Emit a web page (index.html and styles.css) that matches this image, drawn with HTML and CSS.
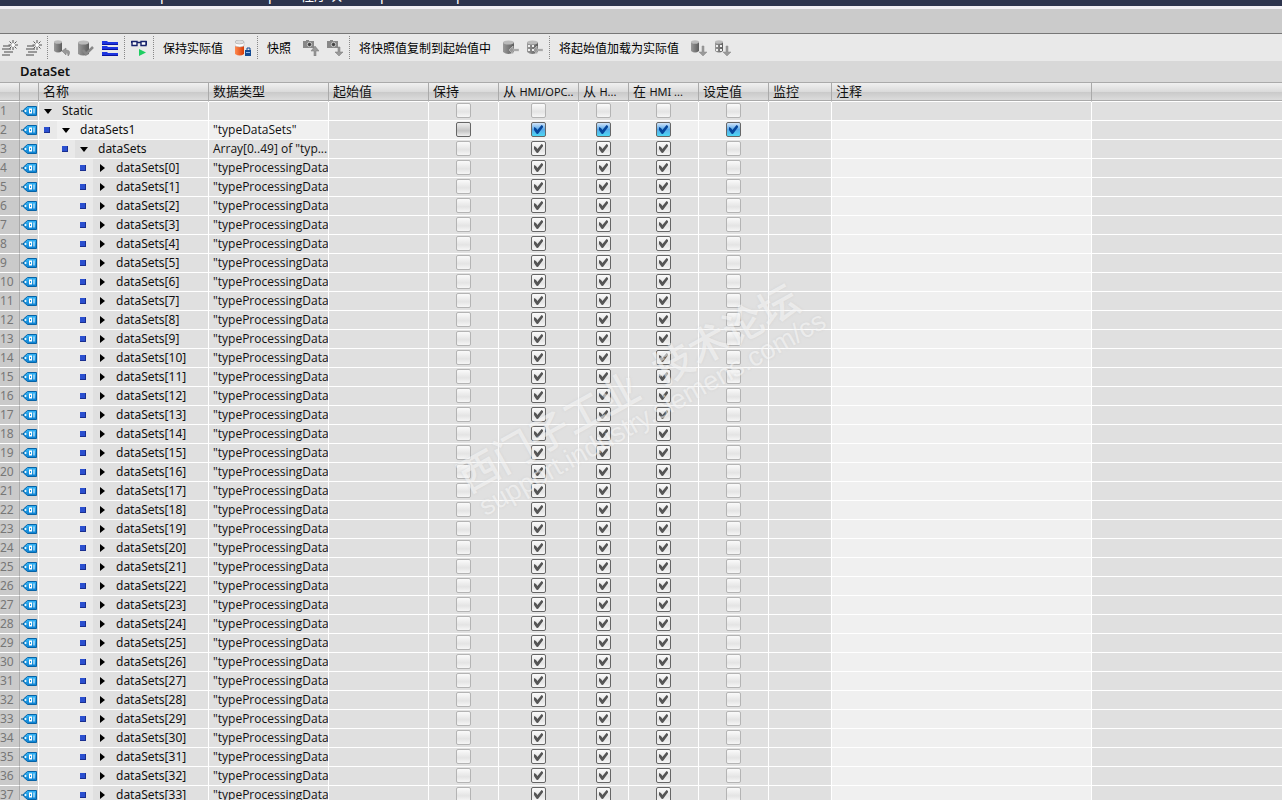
FILE: index.html
```
<!DOCTYPE html>
<html lang="zh-CN">
<head>
    <meta charset="UTF-8">
    <title>DataSet</title>
    <meta name="viewport" content="width=device-width, initial-scale=1.0">
    <link rel="stylesheet" href="styles.css">
</head>
<body>
    <!-- shared icons -->
    <svg class="sprite" aria-hidden="true">
        <defs>
            <linearGradient id="gray" x1="0" x2="1"><stop offset="0" stop-color="#999"/><stop offset="1" stop-color="#5c5c5c"/></linearGradient>
            <linearGradient id="orange" x1="0" x2="1"><stop offset="0" stop-color="#ff8a50"/><stop offset="1" stop-color="#d83c05"/></linearGradient>
            <linearGradient id="blue" x1="0" x2="0" y1="0" y2="1"><stop offset="0" stop-color="#35b4f5"/><stop offset="1" stop-color="#0a7fd0"/></linearGradient>
        </defs>
        <symbol id="i-tag" viewBox="0 0 16 12">
            <path d="M0 6h4" stroke="#064a7c" stroke-width="1"/>
            <path d="M6.500 1.500H15.500V10.500H6.500L2.500 7V5z" fill="url(#blue)" stroke="#0664a8"/>
            <circle cx="4.500" cy="6" r="1" fill="#fff"/>
            <rect x="8.500" y="4" width="2" height="4" fill="none" stroke="#fff"/>
            <path d="M13 3.500v5" stroke="#fff" stroke-width="1"/>
        </symbol>
        <symbol id="i-new" viewBox="0 0 16 16">
            <path d="M1 6h7M0 9h9M2 12h9M0 15h8" stroke="#999" stroke-width="2"/>
            <path d="M11 0v3M11 7v3M6.500 5h3M13 5h3M7.500 1.500l2 2M14.500 1.500l-2 2M7.500 8.500l2-2M14.500 8.500l-2-2" stroke="#555"/>
            <circle cx="11" cy="5" r="1.500" fill="#fff"/>
        </symbol>
        <symbol id="i-cyl" viewBox="0 0 16 16">
            <path d="M0 2v9q4 3 8 0V2z" fill="url(#gray)"/>
            <ellipse cx="4" cy="2" rx="4" ry="1.800" fill="#bbb"/>
        </symbol>
        <symbol id="i-undo" viewBox="0 0 16 16">
            <use href="#i-cyl"/>
            <path d="M8 11l4-3v2q5 0 3 5l-1 1q0-4-2-3v2z" fill="#999" stroke="#777" stroke-width=".5"/>
        </symbol>
        <symbol id="i-check" viewBox="0 0 16 16">
            <path d="M0 2v12q5 3 11 0V2z" fill="url(#gray)"/>
            <ellipse cx="5.500" cy="2.500" rx="5.500" ry="2" fill="#bbb"/>
            <path d="M5 10l3 4 7-7" fill="none" stroke="#888" stroke-width="2.500"/>
        </symbol>
        <symbol id="i-tree" viewBox="0 0 16 16">
            <path d="M0 1h5l1 1h10v3H0zM0 6h5l1 1h10v3H0zM0 12h5l1 1h10v3H0z" fill="#1d35e0"/>
            <path d="M6 1.500h10M6 6.500h10M6 11.500h10" stroke="#e9e9e9"/>
            <path d="M0 4.500h16M0 9.500h16M0 15.500h16" stroke="#0a14a0"/>
        </symbol>
        <symbol id="i-watch" viewBox="0 0 16 16">
            <path d="M1 1.500h5v4H1zM10 1.500h5v4h-5zM6 2.500h4M.500 1v2M15.500 1v4" fill="#fff" stroke="#17226b" stroke-width="1.400"/>
            <path d="M8 9l7 3.500L8 16z" fill="#1fce62"/>
        </symbol>
        <symbol id="i-keep" viewBox="0 0 16 16">
            <path d="M0 2v12q5 3 9 0V2z" fill="url(#orange)"/>
            <path d="M0 2v4q5 2 9 0V2z" fill="#fff" stroke="#aaa" stroke-width=".5"/>
            <ellipse cx="4.500" cy="2" rx="4.500" ry="2" fill="#ddd" stroke="#999" stroke-width=".5"/>
            <path d="M12 10V8h3v2" fill="none" stroke="#134b93"/>
            <rect x="10" y="10" width="6" height="6" fill="#134b93"/>
            <path d="M11 12.500h4" stroke="#8fb9ee"/>
        </symbol>
        <symbol id="i-cam" viewBox="0 0 16 16">
            <path d="M0 1h3V0h3v1h5v7H0z" fill="#888"/>
            <circle cx="6.500" cy="4.500" r="2.200" fill="#444" stroke="#ccc"/>
        </symbol>
        <symbol id="i-cam-up" viewBox="0 0 16 16">
            <use href="#i-cam"/>
            <path d="M12 6l4 5h-3v5h-2v-5H8z" fill="#999" stroke="#777" stroke-width=".5"/>
        </symbol>
        <symbol id="i-cam-down" viewBox="0 0 16 16">
            <use href="#i-cam"/>
            <path d="M12 16l4-4h-3V7h-2v5H8z" fill="#999" stroke="#777" stroke-width=".5"/>
        </symbol>
        <symbol id="i-dots" viewBox="0 0 16 16">
            <path d="M1 5h2v2H1zM5 5h2v2H5zM1 9h2v2H1zM5 9h2v2H5z" fill="#eee"/>
        </symbol>
        <symbol id="i-left" viewBox="0 0 16 16">
            <path d="M0 2v10q5 4 11 0V2z" fill="url(#gray)"/>
            <ellipse cx="5.500" cy="2.500" rx="5.500" ry="2" fill="#bbb"/>
            <path d="M6 10l4-4v3h6v2h-6v3z" fill="#999" stroke="#ccc" stroke-width=".6"/>
        </symbol>
        <symbol id="i-down" viewBox="0 0 16 16">
            <use href="#i-cyl"/>
            <path d="M12 16l4-4h-3V6h-2v6H8z" fill="#999" stroke="#888" stroke-width=".5"/>
        </symbol>
    </svg>

    <div class="titlebar"><span>p</span><span>p</span><span>程序块</span><span>p</span><span>p</span></div>
    <div class="band"></div>

    <div class="toolbar">
        <div class="group first">
            <button aria-label="插入行"><svg><use href="#i-new"/></svg></button>
            <button aria-label="添加行"><svg><use href="#i-new"/></svg></button>
        </div>
        <div class="group">
            <button aria-label="复位起始值"><svg><use href="#i-undo"/></svg></button>
            <button aria-label="更新接口"><svg><use href="#i-check"/></svg></button>
            <button aria-label="扩展模式"><svg><use href="#i-tree"/></svg></button>
        </div>
        <div class="group">
            <button aria-label="全部监视"><svg><use href="#i-watch"/></svg></button>
        </div>
        <div class="group">
            <button class="text">保持实际值</button>
            <button aria-label="锁定"><svg><use href="#i-keep"/></svg></button>
        </div>
        <div class="group">
            <button class="text">快照</button>
            <button aria-label="上传快照"><svg><use href="#i-cam-up"/></svg></button>
            <button aria-label="下载快照"><svg><use href="#i-cam-down"/></svg></button>
        </div>
        <div class="group">
            <button class="text">将快照值复制到起始值中</button>
            <button aria-label="复制全部"><svg><use href="#i-left"/></svg></button>
            <button aria-label="复制设定值"><svg><use href="#i-left"/><use href="#i-dots"/></svg></button>
        </div>
        <div class="group">
            <button class="text">将起始值加载为实际值</button>
            <button aria-label="加载全部"><svg><use href="#i-down"/></svg></button>
            <button aria-label="加载设定值"><svg><use href="#i-down"/><use href="#i-dots"/></svg></button>
        </div>
    </div>

    <h1>DataSet</h1>

    <div class="editor">
        <table>
            <colgroup>
                <col class="w-num"><col class="w-tag"><col class="w-name"><col class="w-type"><col class="w-start">
                <col class="w-check"><col class="w-access"><col class="w-write"><col class="w-check"><col class="w-check">
                <col class="w-watch"><col class="w-note"><col>
            </colgroup>
            <thead>
                <tr>
                    <th></th>
                    <th></th>
                    <th>名称</th>
                    <th>数据类型</th>
                    <th>起始值</th>
                    <th>保持</th>
                    <th>从 <small>HMI/OPC..</small></th>
                    <th>从 <small>H...</small></th>
                    <th>在 <small>HMI ...</small></th>
                    <th>设定值</th>
                    <th>监控</th>
                    <th>注释</th>
                    <th></th>
                </tr>
            </thead>
            <tbody id="rows"></tbody>
        </table>
        <div class="watermark">
            <div class="wm-name"><span>西门子工业</span><span>技术论坛</span></div>
            <div class="wm-site">support.industry.siemens.com/cs</div>
        </div>
    </div>
    <script src="rows.js"></script>
</body>
</html>
```
FILE: styles.css
```
* {
    box-sizing: border-box;
}
body {
    margin: 0;
    height: 100vh;
    overflow: hidden;
    display: flex;
    flex-direction: column;
    background: #e0e0e0;
    color: #111;
    font-family: "Noto Sans", "Noto Sans CJK SC", sans-serif;
    font-size: 12px;
}
.sprite {
    position: absolute;
    width: 0;
    height: 0;
}
.titlebar {
    flex: none;
    height: 6px;
    overflow: hidden;
    display: grid;
    grid-template-columns: 108px 32px 80px 76px auto;
    align-items: end;
    align-content: end;
    padding: 0 0 3px 160px;
    background: #2d344d;
    color: #fff;
    font-size: 14px;
    line-height: 16px;
}
.band {
    flex: none;
    height: 28px;
    background: #cbcbcb;
    border-top: 3px solid #f1eff3;
    border-bottom: 1px solid #777;
}

/* toolbar */
.toolbar {
    flex: none;
    display: flex;
    align-items: center;
    height: 27px;
    background: #e9e9e9;
    white-space: nowrap;
}
.group {
    display: flex;
    align-items: center;
    height: 23px;
    padding: 0 2px;
    border-left: 1px dotted #888;
}
.group.first {
    margin-left: -4px;
    border-left: 0;
    padding-right: 1px;
}
.toolbar button {
    display: flex;
    align-items: center;
    justify-content: center;
    width: 24px;
    height: 22px;
    padding: 0;
    border: 0;
    background: none;
    color: #000;
    font: inherit;
}
.toolbar button.text {
    width: auto;
    padding: 0 8px 0 7px;
}
.toolbar svg {
    width: 16px;
    height: 16px;
}

h1 {
    flex: none;
    margin: 0;
    height: 21px;
    padding-left: 20px;
    background: #d8d8d8;
    font-size: 13px;
    font-weight: 600;
    line-height: 21px;
}

/* variable table */
.editor {
    position: relative;
    flex: 1;
    min-height: 0;
    overflow: hidden;
}
table {
    width: 100%;
    table-layout: fixed;
    border-collapse: separate;
    border-spacing: 0;
}
.w-num { width: 20px; }
.w-tag { width: 19px; }
.w-name { width: 170px; }
.w-type { width: 120px; }
.w-start { width: 100px; }
.w-check { width: 70px; }
.w-access { width: 80px; }
.w-write { width: 50px; }
.w-watch { width: 63px; }
.w-note { width: 260px; }
th {
    height: 20px;
    padding: 0 0 2px 4px;
    border-top: 1px solid #aaa;
    border-right: 1px solid #aaa;
    border-bottom: 1px solid #fff;
    background: linear-gradient(#f0f0f0, #dadada 50%, #cacaca 52%, #dedede);
    box-shadow: inset 0 -1px #aaa;
    font-size: 13px;
    font-weight: 400;
    line-height: 14px;
    text-align: left;
    white-space: nowrap;
    overflow: hidden;
}
th small {
    font-size: 11px;
}
td {
    height: 19px;
    padding: 0;
    border-right: 1px solid #fff;
    border-bottom: 1px solid #fff;
    background: #e0e0e0;
    line-height: 18px;
    white-space: nowrap;
    overflow: hidden;
}
th:last-child, td:last-child {
    border-right: 0;
}
td.num {
    background: #cacaca;
    border-right-color: #aaa;
    color: #777;
}
td.tag {
    background: #d6d6d6;
}
td.tag svg {
    display: block;
    width: 16px;
    height: 12px;
    margin: 0 0 0 1px;
}
td.type {
    padding-left: 4px;
    font-family: "Open Sans", sans-serif;
}
td.check {
    vertical-align: top;
    padding-top: 1px;
}
td.check input {
    display: block;
    margin: 0 auto;
}
td.note, .current td.name, .current td.type, .current td.check {
    background: #f0f0f0;
}
.root td.note {
    background: #e0e0e0;
}

/* tree in the name column */
.node {
    display: flex;
    align-items: center;
    height: 18px;
}
.indent {
    display: flex;
    align-items: center;
    justify-content: flex-end;
    height: 18px;
    padding-right: 7px;
    background: #e9e9e9;
}
.indent.level0 { display: none; }
.indent.level1 { width: 18px; }
.indent.level2 { width: 36px; }
.indent.level3 { width: 54px; }
.indent::after {
    content: "";
    width: 5px;
    height: 5px;
    background: #2b50d0;
    border-right: 1px solid #1a2f90;
    border-bottom: 1px solid #1a2f90;
}
.toggle {
    display: flex;
    align-items: center;
    justify-content: center;
    width: 23px;
    height: 18px;
    padding: 0 5px 0 0;
    border: 0;
    background: none;
}
.toggle::before {
    content: "";
    border: 4px solid transparent;
    border-top: 5px solid #000;
    border-bottom: 0;
}
.toggle.closed::before {
    border: 4px solid transparent;
    border-left: 5px solid #000;
    border-right: 0;
}

/* check boxes */
input[type="checkbox"] {
    appearance: none;
    width: 15px;
    height: 15px;
    border: 1px solid #666;
    border-radius: 2px;
    background: linear-gradient(#fafafa, #e4e4e4 60%, #f6f6f6);
}
input[type="checkbox"]:disabled:not(:checked) {
    border-color: #b4b4b4;
}
input[type="checkbox"]:checked::before {
    content: "";
    display: block;
    width: 9px;
    height: 9px;
    margin: 2px;
    background: #555;
    clip-path: polygon(0 22%, 22% 34%, 38% 56%, 84% 0, 100% 12%, 100% 26%, 44% 100%, 28% 96%, 0 56%);
}
.current input[type="checkbox"] {
    background: linear-gradient(#eee, #c4c4c4 60%, #eee);
}
.current input[type="checkbox"]:checked {
    background: linear-gradient(#d2e5fa, #5aa8e8 50%, #4cd8f4);
}
.current input[type="checkbox"]:checked::before {
    background: #05469c;
}

/* forum mark over the grid */
.watermark {
    position: absolute;
    left: 442px;
    top: 276px;
    width: 400px;
    transform: rotate(-29deg);
    color: rgba(255, 255, 255, 0.5);
    text-shadow: 0 0 3px rgba(160, 160, 160, 0.2);
    white-space: nowrap;
    pointer-events: none;
}
.wm-name {
    display: flex;
    gap: 22px;
    font-family: "Noto Sans CJK SC", sans-serif;
    font-size: 40px;
    font-weight: 500;
    line-height: 44px;
}
.wm-site {
    padding-left: 4px;
    font-family: "Liberation Sans", sans-serif;
    font-size: 27px;
    line-height: 28px;
}
```
FILE: rows.js
```
var rows = [
    { name: 'Static', type: '', level: 0, checks: [0, 0, 0, 0, 0] },
    { name: 'dataSets1', type: '"typeDataSets"', level: 1, checks: [0, 1, 1, 1, 1] },
    { name: 'dataSets', type: 'Array[0..49] of "typ...', level: 2, checks: [0, 1, 1, 1, 0] }
];
for (var i = 0; i < 34; i++) {
    rows.push({ name: 'dataSets[' + i + ']', type: '"typeProcessingData"', level: 3, checks: [0, 1, 1, 1, 0] });
}

var labels = ['保持', '从 HMI/OPC 访问', '从 HMI 写入', '在 HMI 可见', '设定值'];
var html = '';
rows.forEach(function(row, n) {
    var state = n == 0 ? 'root' : n == 1 ? 'current' : '';
    html += '<tr class="' + state + '">';
    html += '<td class="num">' + (n + 1) + '</td>';
    html += '<td class="tag"><svg><use href="#i-tag"/></svg></td>';
    html += '<td class="name"><div class="node"><span class="indent level' + row.level + '"></span>';
    html += '<button class="toggle' + (row.level == 3 ? ' closed' : '') + '" aria-label="展开 ' + row.name + '"></button>';
    html += '<span>' + row.name + '</span></div></td>';
    html += '<td class="type">' + row.type + '</td><td></td>';
    row.checks.forEach(function(on, c) {
        html += '<td class="check"><input type="checkbox" aria-label="' + labels[c] + ' ' + row.name + '"' +
            (on ? ' checked' : '') + (n == 1 ? '' : ' disabled') + '></td>';
    });
    html += '<td></td><td class="note"></td><td></td></tr>';
});
document.getElementById('rows').innerHTML = html;
```
